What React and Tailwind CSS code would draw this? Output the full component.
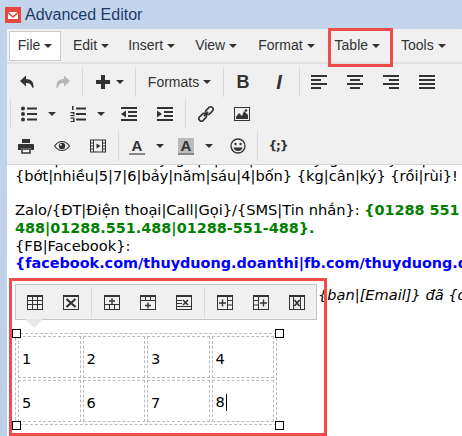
import React from 'react';

const Ic = ({ children, w = 16, h = 16, className = '' }) => (
  <svg width={w} height={h} viewBox={`0 0 ${w} ${h}`} fill="#333" className={className}>{children}</svg>
);

const Caret = ({ className = '' }) => (
  <span className={`inline-block w-0 h-0 border-l-4 border-r-4 border-t-4 border-l-transparent border-r-transparent border-t-[#333] ${className}`} />
);

const Btn = ({ children, className = 'w-9' }) => (
  <div className={`h-[30px] flex items-center justify-center shrink-0 ${className}`}>{children}</div>
);

const Sep = ({ className = '' }) => <div className={`w-px h-[30px] bg-[#d9d9d9] shrink-0 ${className}`} />;

const Undo = ({ flip, color = '#333' }) => (
  <Ic>
    <path fill={color} transform={flip ? 'translate(16 0) scale(-1 1)' : undefined} d="M7 1.500 1 7l6 5.500V9c3-.3 5 .7 6 4 1 1.500 1.500 1.500 1.500 0C15 8 12 5 7 5z" />
  </Ic>
);

const Lines = ({ rows }) => (
  <Ic>
    {rows.map(([x, y, w], i) => <rect key={i} x={x} y={y} width={w} height="2" />)}
  </Ic>
);

const AlignLeft = () => <Lines rows={[[0, 1, 16], [0, 5, 10], [0, 9, 16], [0, 13, 10]]} />;
const AlignCenter = () => <Lines rows={[[0, 1, 16], [3, 5, 10], [0, 9, 16], [3, 13, 10]]} />;
const AlignRight = () => <Lines rows={[[0, 1, 16], [6, 5, 10], [0, 9, 16], [6, 13, 10]]} />;
const AlignFull = () => <Lines rows={[[0, 1, 16], [0, 5, 16], [0, 9, 16], [0, 13, 16]]} />;

const Bullets = () => (
  <Ic>
    <circle cx="2" cy="2.500" r="2" /><circle cx="2" cy="8" r="2" /><circle cx="2" cy="13.500" r="2" />
    <rect x="6" y="1.500" width="10" height="2" /><rect x="6" y="7" width="10" height="2" /><rect x="6" y="12.500" width="10" height="2" />
  </Ic>
);

const Numbers = () => (
  <Ic>
    <rect x="2" y="0" width="1.500" height="4" /><rect x="0.500" y="6" width="4" height="1.200" /><rect x="3" y="7" width="1.500" height="1.500" /><rect x="0.500" y="9" width="4" height="1.200" />
    <rect x="0.500" y="11.500" width="4" height="1.200" /><rect x="3" y="12.500" width="1.500" height="3" /><rect x="0.500" y="15" width="4" height="1" />
    <rect x="6" y="1.500" width="10" height="2" /><rect x="6" y="7" width="10" height="2" /><rect x="6" y="12.500" width="10" height="2" />
  </Ic>
);

const Indent = ({ out }) => (
  <Ic>
    <rect x="0" y="1" width="16" height="2" /><rect x="7" y="5" width="9" height="2" /><rect x="7" y="9" width="9" height="2" /><rect x="0" y="13" width="16" height="2" />
    <path d={out ? 'M5 4.500v7L0 8z' : 'M0 4.500v7L5 8z'} />
  </Ic>
);

const Link = () => (
  <Ic>
    <g fill="none" stroke="#333" strokeWidth="1.600" transform="rotate(-45 8 8)">
      <rect x="-1" y="5.500" width="8.500" height="5" rx="2.500" />
      <rect x="8.500" y="5.500" width="8.500" height="5" rx="2.500" />
      <path d="M5 8h6" />
    </g>
  </Ic>
);

const Picture = () => (
  <Ic>
    <rect x="0.500" y="1.500" width="15" height="13" fill="none" stroke="#333" />
    <path d="M2 13v-2l3-4 3 3 2-5 4 4v4z" /><circle cx="12" cy="4.500" r="1.300" />
  </Ic>
);

const Printer = () => (
  <Ic>
    <rect x="4" y="1" width="8" height="4" />
    <path d="M1 6h14a1 1 0 0 1 1 1v5h-3v-2H3v2H0V7a1 1 0 0 1 1-1z" />
    <path d="M4 11h8v4H4z" fill="none" stroke="#333" strokeWidth="1.500" />
  </Ic>
);

const Eye = () => (
  <Ic>
    <path fill="none" stroke="#333" strokeWidth="1.200" d="M0.500 8C3 4.500 5.500 3.500 8 3.500S13 4.500 15.500 8C13 11.500 10.500 12.500 8 12.500S3 11.500 .5 8z" />
    <circle cx="8" cy="8" r="3.200" />
    <circle cx="6.800" cy="6.800" r="1" fill="#f0f0f0" />
  </Ic>
);

const Film = () => (
  <Ic>
    <rect x="0.500" y="2" width="15" height="12" fill="none" stroke="#333" />
    <path d="M3.500 2v12M12.500 2v12M0 5h3.500M0 8h3.500M0 11h3.500M12.500 5H16M12.500 8H16M12.500 11H16" stroke="#333" />
    <path d="M6.500 5.500v5L10.500 8z" />
  </Ic>
);

const LetterA = ({ bg }) => (
  <div className={`w-4 h-[17px] flex flex-col items-center ${bg ? 'bg-[#bbb]' : ''}`}>
    <span className="text-[15px] leading-[15px] font-bold text-[#333]">A</span>
    <span className="w-4 h-0.5 mt-auto bg-[#888]" />
  </div>
);

const Smile = () => (
  <Ic>
    <circle cx="8" cy="8" r="7" fill="none" stroke="#333" strokeWidth="1.300" />
    <circle cx="5.500" cy="6" r="1.200" /><circle cx="10.500" cy="6" r="1.200" />
    <path d="M3.500 9.500h9C12 12 10 13 8 13s-4-1-4.500-3.500z" />
  </Ic>
);

// table toolbar icons share the same frame, only the inner part differs
const TableIc = ({ children }) => (
  <svg width="16" height="15" viewBox="0 0 16 15">
    <rect x="0.500" y="0.500" width="15" height="14" fill="none" stroke="#333" />
    <rect x="0" y="0" width="16" height="2" fill="#333" />
    {children}
  </svg>
);
const g = '#333';
const tableIcons = [
  <TableIc><path stroke={g} d="M5.500 1v13M10.500 1v13M1 5.500h14M1 9.500h14" /></TableIc>,
  <TableIc><path stroke={g} strokeWidth="2.200" d="M3.500 4l9 8M12.500 4l-9 8" /></TableIc>,
  <TableIc><path stroke={g} d="M1 9.500h14M5.500 10v4M10.500 10v4" /><path stroke={g} strokeWidth="1.400" d="M5 6h6M8 3v6" /></TableIc>,
  <TableIc><path stroke={g} d="M1 5.500h14M5.500 1v4M10.500 1v4" /><path stroke={g} strokeWidth="1.400" d="M5 10.500h6M8 7.500v6" /></TableIc>,
  <TableIc><path stroke={g} d="M1 5.500h5M1 8.500h5M1 11.500h14" /><path stroke={g} strokeWidth="1.600" d="M7 5l5 5M12 5l-5 5" /></TableIc>,
];
const tableIcons2 = [
  <TableIc><path stroke={g} d="M10.500 1v13M11 5.500h4M11 10h4" /><path stroke={g} strokeWidth="1.400" d="M2 8h7M5.500 4.500v7" /></TableIc>,
  <TableIc><path stroke={g} d="M5.500 1v13M1 5.500h4M1 10h4" /><path stroke={g} strokeWidth="1.400" d="M7 8h7M10.500 4.500v7" /></TableIc>,
  <TableIc><path stroke={g} d="M4.500 1v13M11.500 1v13" /><path stroke={g} strokeWidth="1.800" d="M5.500 5l5 6M10.500 5l-5 6" /></TableIc>,
];

const Handle = ({ className }) => (
  <div className={`absolute w-[9px] h-[9px] bg-white border border-black ${className}`} />
);

const menu = [
  ['Edit', 'ml-[12px]'],
  ['Insert', 'ml-[19px]'],
  ['View', 'ml-[20px]'],
  ['Format', 'ml-[21px]'],
  ['Table', 'ml-[20px]'],
  ['Tools', 'ml-[21px]'],
];

// descenders of the line scrolled away under the toolbar
const peek = [
  ['|', 'ml-[39px]'],
  ['y', 'ml-[100px]'],
  ['g', 'ml-[8px]'],
  ['|', 'ml-[12px]'],
  ['|', 'ml-[12px]'],
  ['|', 'ml-[30px]'],
  ['y', 'ml-[60px]'],
  ['g', 'ml-[7px]'],
  ['y', 'ml-[50px]'],
  ['|', 'ml-[24px]'],
];

const cells = [['1', '2', '3', '4'], ['5', '6', '7', '8']];

export default function App() {
  return (
    <div className="relative w-[462px] h-[436px] overflow-hidden bg-gradient-to-b from-[#c3d5ec] to-[#bccfe8] font-['Liberation_Sans',sans-serif] text-[#333]">
      <div className="h-[29px] flex items-center pl-[5px] pt-px">
        <svg width="16" height="16" viewBox="0 0 16 16">
          <rect width="16" height="16" fill="#e8473f" />
          <path d="M3 5h10v7H3z" fill="#fff" />
          <path d="M3 4.500 8 9l5-4.500v2L8 11 3 6.500z" fill="#e8473f" />
        </svg>
        <span className="ml-1 text-[16px] text-[#1e3a66]">Advanced Editor</span>
      </div>

      <div className="ml-[7px] h-[407px] bg-white flex flex-col">
        <div className="h-[35px] shrink-0 bg-[#f0f0f0] border-b-2 border-[#e2e2e2] flex items-center pl-[2px] text-[14px]">
          <div className="w-[52px] h-[30px] bg-white border border-[#ccc] flex items-center justify-center gap-1">
            File <Caret />
          </div>
          {menu.map(([name, ml]) => (
            <div key={name} className={`flex items-center gap-1 ${ml}`}>
              {name} <Caret />
            </div>
          ))}
        </div>

        <div className="h-[101px] shrink-0 bg-[#f0f0f0] border-b border-[#d5d5d5] pt-[3px] flex flex-col gap-[2px]">
          <div className="flex items-center pl-[2px]">
            <Btn><Undo /></Btn>
            <Btn><Undo flip color="#b5b5b5" /></Btn>
            <Sep className="ml-px" />
            <Btn className="w-[52px]">
              <Ic><path d="M6 1h4v5h5v4h-5v5H6v-5H1V6h5z" /></Ic>
              <Caret className="ml-[5px]" />
            </Btn>
            <Sep />
            <Btn className="w-[87px] text-[14px] gap-1">Formats <Caret /></Btn>
            <Sep />
            <Btn className="w-9 ml-px"><span className="font-bold text-[18px]">B</span></Btn>
            <Btn className="w-9"><span className="italic font-bold text-[20px]">I</span></Btn>
            <Sep className="ml-[2px]" />
            <Btn className="w-9 ml-px"><AlignLeft /></Btn>
            <Btn><AlignCenter /></Btn>
            <Btn><AlignRight /></Btn>
            <Btn><AlignFull /></Btn>
          </div>

          <div className="flex items-center pl-[3px]">
            <Sep />
            <Btn><Bullets /></Btn>
            <Btn className="w-[10px] mr-[3px]"><Caret /></Btn>
            <Btn><Numbers /></Btn>
            <Btn className="w-[10px] mr-[5px]"><Caret /></Btn>
            <Btn><Indent out /></Btn>
            <Btn><Indent /></Btn>
            <Sep className="ml-[2px]" />
            <Btn className="w-9 ml-[2px]"><Link /></Btn>
            <Btn><Picture /></Btn>
          </div>

          <div className="flex items-center pl-px">
            <Btn><Printer /></Btn>
            <Btn><Eye /></Btn>
            <Btn><Film /></Btn>
            <Sep className="ml-[2px]" />
            <Btn><LetterA /></Btn>
            <Btn className="w-[10px] mr-[3px]"><Caret /></Btn>
            <Btn><LetterA bg /></Btn>
            <Btn className="w-[10px] mr-[6px]"><Caret /></Btn>
            <Btn><Smile /></Btn>
            <Sep className="ml-px" />
            <Btn className="w-9 ml-[2px]"><span className="font-bold text-[12px] tracking-[-1px] font-['DejaVu_Sans',sans-serif]">{'{;}'}</span></Btn>
          </div>
        </div>

        <div className="relative flex-1 overflow-hidden pl-[8px] font-['DejaVu_Sans',sans-serif] text-[14.600px] leading-[17px] text-black whitespace-nowrap">
          <div className="-mt-[15px]">
            <div className="flex h-[17px]">
              {peek.map(([ch, ml], i) => <span key={i} className={ml}>{ch}</span>)}
            </div>
            <div>{'{bớt|nhiều|5|7|6|bảy|năm|sáu|4|bốn} {kg|cân|ký} {rồi|rùi}!'}</div>
            <div className="h-[17px]" />
            <div>
              {'Zalo/{ĐT|Điện thoại|Call|Gọi}/{SMS|Tin nhắn}: '}
              <b className="text-[#008000] text-[14.400px]">{'{01288 551'}</b>
            </div>
            <div><b className="text-[#008000] text-[14.400px]">{'488|01288.551.488|01288-551-488}.'}</b></div>
            <div>{'{FB|Facebook}:'}</div>
            <div><b className="text-[#0000ff] text-[14.400px]">{'{facebook.com/thuyduong.doanthi|fb.com/thuyduong.doanthi}'}</b></div>
            <div className="h-[14px]" />
            <div className="pl-[303px] italic">{'{bạn|[Email]} đã {đăng ký}'}</div>
          </div>

          <div className="relative mt-[30px] w-max">
            <table className="table-fixed w-[262px] border-separate border-spacing-[2px] border border-dashed border-[#bbb]">
              <tbody>
                {cells.map((row, i) => (
                  <tr key={i}>
                    {row.map((c) => (
                      <td key={c} className="h-[42px] p-0 pl-[3px] pt-[2px] border border-dashed border-[#bbb]">
                        {c}
                        {c === '8' && <span className="inline-block w-px h-[17px] bg-black align-middle ml-px" />}
                      </td>
                    ))}
                  </tr>
                ))}
              </tbody>
            </table>
            <Handle className="-left-[3px] -top-[4px]" />
            <Handle className="-right-[7px] -top-[4px]" />
            <Handle className="-left-[3px] -bottom-[5px]" />
            <Handle className="-right-[7px] -bottom-[5px]" />
          </div>

          {/* inline table toolbar floats over the content */}
          <div className="absolute left-[8px] top-[119px] w-[302px] h-[36px] bg-[#f0f0f0] border border-[#c5c5c5] flex items-center pl-px">
            {tableIcons.slice(0, 2).map((x, i) => <Btn key={i}>{x}</Btn>)}
            <Sep className="ml-[2px] mr-[2px]" />
            {tableIcons.slice(2).map((x, i) => <Btn key={i}>{x}</Btn>)}
            <Sep className="ml-[2px] mr-[2px]" />
            {tableIcons2.map((x, i) => <Btn key={i}>{x}</Btn>)}
            <div className="absolute left-[9px] top-full w-0 h-0 border-l-[9px] border-r-[9px] border-t-[9px] border-l-transparent border-r-transparent border-t-[#e6e6e6]" />
          </div>
        </div>
      </div>

      {/* red annotation boxes */}
      <div className="absolute left-[328px] top-[28px] w-[65px] h-[39px] border-[3px] border-[#ef4c4a]" />
      <div className="absolute left-[9px] top-[278px] w-[318px] h-[158px] border-[3px] border-[#ef4c4a]" />
    </div>
  );
}
